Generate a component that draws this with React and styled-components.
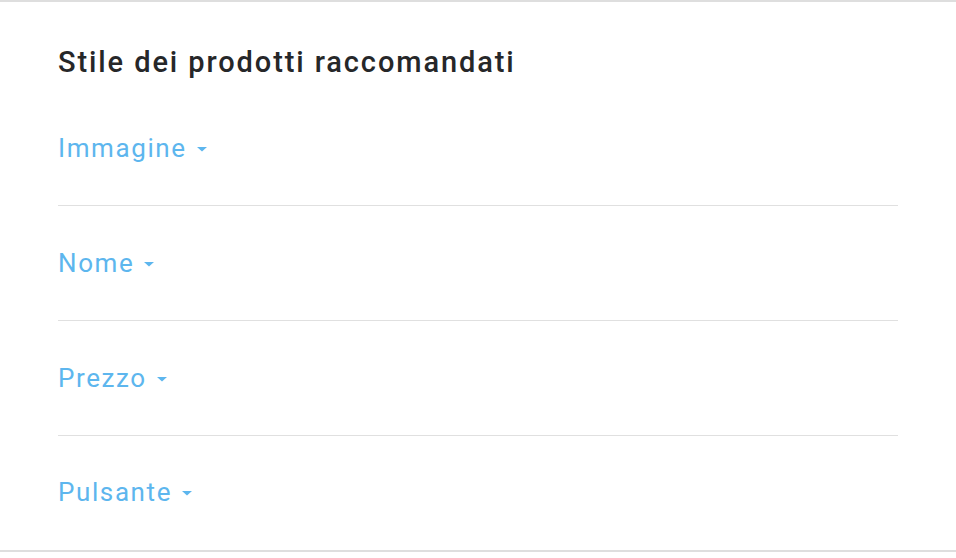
import React from "react";
import styled, { createGlobalStyle } from "styled-components";

const GlobalStyle = createGlobalStyle`
  html, body {
    margin: 0;
    padding: 0;
    background: #ffffff;
  }
  body {
    font-family: Roboto, "Liberation Sans", Arial, sans-serif;
  }
`;

// blocco con bordo sopra e sotto
const Panel = styled.section`
  border-top: 2px solid #dedede;
  border-bottom: 2px solid #dedede;
  padding: 0 58px;
  height: 548px;
  box-sizing: content-box;
  background: #fff;
`;

const Title = styled.h2`
  margin: 0;
  padding-top: 44px;
  margin-bottom: 13px;
  font-size: 29px;
  line-height: 32px;
  font-weight: 500;
  color: #262729;
  letter-spacing: 1.9px;
`;

const List = styled.div`
  display: flex;
  flex-direction: column;
`;

const Row = styled.div`
  height: ${(p) => (p.$last ? "112px" : "114px")};
  display: flex;
  align-items: center;
  border-bottom: ${(p) => (p.$last ? "none" : "1px solid #e0e0e0")};
`;

const Toggle = styled.button`
  display: flex;
  align-items: center;
  gap: 3px;
  padding: 0;
  border: none;
  background: none;
  cursor: pointer;
  font-family: inherit;
  font-size: 26px;
  line-height: 30px;
  font-weight: 400;
  letter-spacing: 1.6px;
  color: #5db6ee;
`;

const Caret = styled.svg`
  width: 24px;
  height: 24px;
  fill: currentColor;
  margin-top: 1px;
`;

const ArrowDrop = () => (
  <Caret viewBox="0 0 24 24">
    <path d="M7 10l5 4.5 5-4.5z" />
  </Caret>
);

const sections = ["Immagine", "Nome", "Prezzo", "Pulsante"];

const App = () => {
  return (
    <>
      <GlobalStyle />
      <Panel>
        <Title>Stile dei prodotti raccomandati</Title>
        <List>
          {sections.map((label, i) => (
            <Row key={label} $last={i === sections.length - 1}>
              <Toggle>
                {label}
                <ArrowDrop />
              </Toggle>
            </Row>
          ))}
        </List>
      </Panel>
    </>
  );
};

export default App;
